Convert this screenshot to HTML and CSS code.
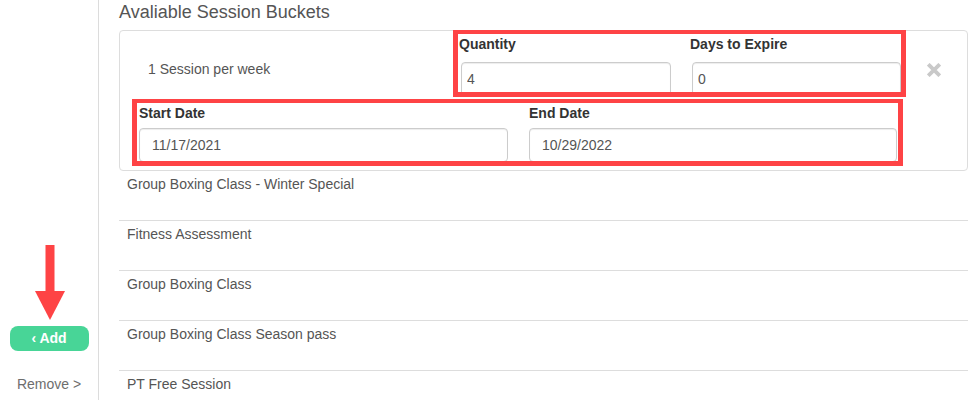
FILE: index.html
```html
<!DOCTYPE html>
<html lang="en">
<head>
<meta charset="utf-8">
<title>Session Buckets</title>
<link rel="stylesheet" href="styles.css">
</head>
<body>
<div class="page">
  <aside class="sidebar">
    <button class="btn-add" type="button">&lsaquo; Add</button>
    <div class="remove-link">Remove &gt;</div>
  </aside>
  <main class="content">
    <h2 class="title">Avaliable Session Buckets</h2>
    <div class="card">
      <div class="row-top">
        <div class="bucket-name">1 Session per week</div>
        <div class="field field-qty">
          <label class="field-label">Quantity</label>
          <input class="input input-small" type="text" value="4">
        </div>
        <div class="field field-days">
          <label class="field-label">Days to Expire</label>
          <input class="input input-small" type="text" value="0">
        </div>
        <div class="remove-x">
          <svg width="14" height="14" viewBox="0 0 14 14" aria-hidden="true">
            <path d="M2.6 2.6 L11.4 11.4 M11.4 2.6 L2.6 11.4" stroke="#c9c9c9" stroke-width="3.8" stroke-linecap="square" fill="none"/>
          </svg>
        </div>
      </div>
      <div class="row-dates">
        <div class="field field-start">
          <label class="field-label">Start Date</label>
          <input class="input input-date" type="text" value="11/17/2021">
        </div>
        <div class="field field-end">
          <label class="field-label">End Date</label>
          <input class="input input-date" type="text" value="10/29/2022">
        </div>
      </div>
    </div>
    <ul class="bucket-list">
      <li>Group Boxing Class - Winter Special</li>
      <li>Fitness Assessment</li>
      <li>Group Boxing Class</li>
      <li>Group Boxing Class Season pass</li>
      <li>PT Free Session</li>
    </ul>
  </main>
</div>

<div class="annot annot-box annot-box-qty"></div>
<div class="annot annot-box annot-box-dates"></div>
<svg class="annot annot-arrow" width="30" height="76" viewBox="0 0 30 76" aria-hidden="true">
  <rect x="10.5" y="0" width="9" height="47" fill="#fe4345"/>
  <polygon points="0,46 30,46 15,75" fill="#fe4345"/>
</svg>
</body>
</html>
```

FILE: styles.css
```css
html, body {
  margin: 0;
  padding: 0;
  overflow: hidden;
  background: #fff;
}

body {
  position: relative;
  font-family: "Liberation Sans", Arial, sans-serif;
  font-size: 14px;
  color: #555;
}

.page {
  display: flex;
  height: 100vh;
  overflow: hidden;
}

/* Sidebar */
.sidebar {
  width: 98px;
  flex: 0 0 98px;
  border-right: 1px solid #dcdcdc;
  display: flex;
  flex-direction: column;
  align-items: center;
  padding-top: 326px;
  box-sizing: content-box;
}

.btn-add {
  width: 79px;
  height: 25px;
  border: none;
  border-radius: 8px;
  background: #48d597;
  color: #fff;
  font-family: "Liberation Sans", Arial, sans-serif;
  font-weight: bold;
  font-size: 14px;
  line-height: 25px;
  padding: 0;
  cursor: pointer;
}

.remove-link {
  margin-top: 23px;
  line-height: 20px;
  font-size: 14px;
  color: #6e6e6e;
}

/* Content */
.content {
  flex: 1;
  padding: 0 6px 0 20px;
  min-width: 0;
}

.title {
  margin: 0 0 8px;
  padding-top: 2px;
  font-size: 18px;
  line-height: 20px;
  font-weight: normal;
  color: #555;
}

.card {
  border: 1px solid #dddddd;
  border-radius: 4px;
  padding: 4px 0 8px;
}

.row-top {
  display: grid;
  grid-template-columns: 339px 231px 231px 1fr;
}

.bucket-name {
  padding: 24px 0 0 28px;
  line-height: 20px;
  color: #555;
}

.field-label {
  display: block;
  font-weight: bold;
  font-size: 14px;
  line-height: 18px;
  color: #333;
  margin-bottom: 9px;
}

.input {
  display: block;
  box-sizing: border-box;
  height: 34px;
  border: 1px solid #cccccc;
  border-radius: 4px;
  box-shadow: inset 0 1px 1px rgba(0, 0, 0, 0.075);
  font-family: "Liberation Sans", Arial, sans-serif;
  font-size: 14px;
  line-height: 20px;
  color: #555;
  background: #fff;
  margin: 0;
}

.input-small {
  padding: 6px 5px;
  margin-left: 2px;
}

.field-qty .input {
  width: 210px;
}

.field-days .input {
  width: 209px;
}

.remove-x {
  padding: 28px 0 0 6px;
  line-height: 0;
}

.row-dates {
  display: flex;
  gap: 21px;
  margin-top: 8px;
  padding-left: 19px;
}

.row-dates .field-label {
  margin-bottom: 6px;
}

.input-date {
  padding: 6px 12px;
}

.field-start .input {
  width: 369px;
}

.field-end .input {
  width: 368px;
}

.bucket-list {
  list-style: none;
  margin: 0;
  padding: 0;
}

.bucket-list li {
  box-sizing: border-box;
  height: 50px;
  padding: 3px 8px 0;
  border-bottom: 1px solid #dddddd;
  line-height: 20px;
  color: #555;
}

/* Annotation overlays (drawn over the screenshot) */
.annot {
  position: absolute;
  pointer-events: none;
}

.annot-box {
  box-sizing: border-box;
  border-style: solid;
  border-color: #fe4345;
  border-width: 4px 5px 5px 5px;
}

.annot-box-qty {
  left: 453px;
  top: 30px;
  width: 453px;
  height: 67px;
}

.annot-box-dates {
  left: 132px;
  top: 99px;
  width: 771px;
  height: 67px;
}

.annot-arrow {
  left: 35px;
  top: 245px;
}
```
